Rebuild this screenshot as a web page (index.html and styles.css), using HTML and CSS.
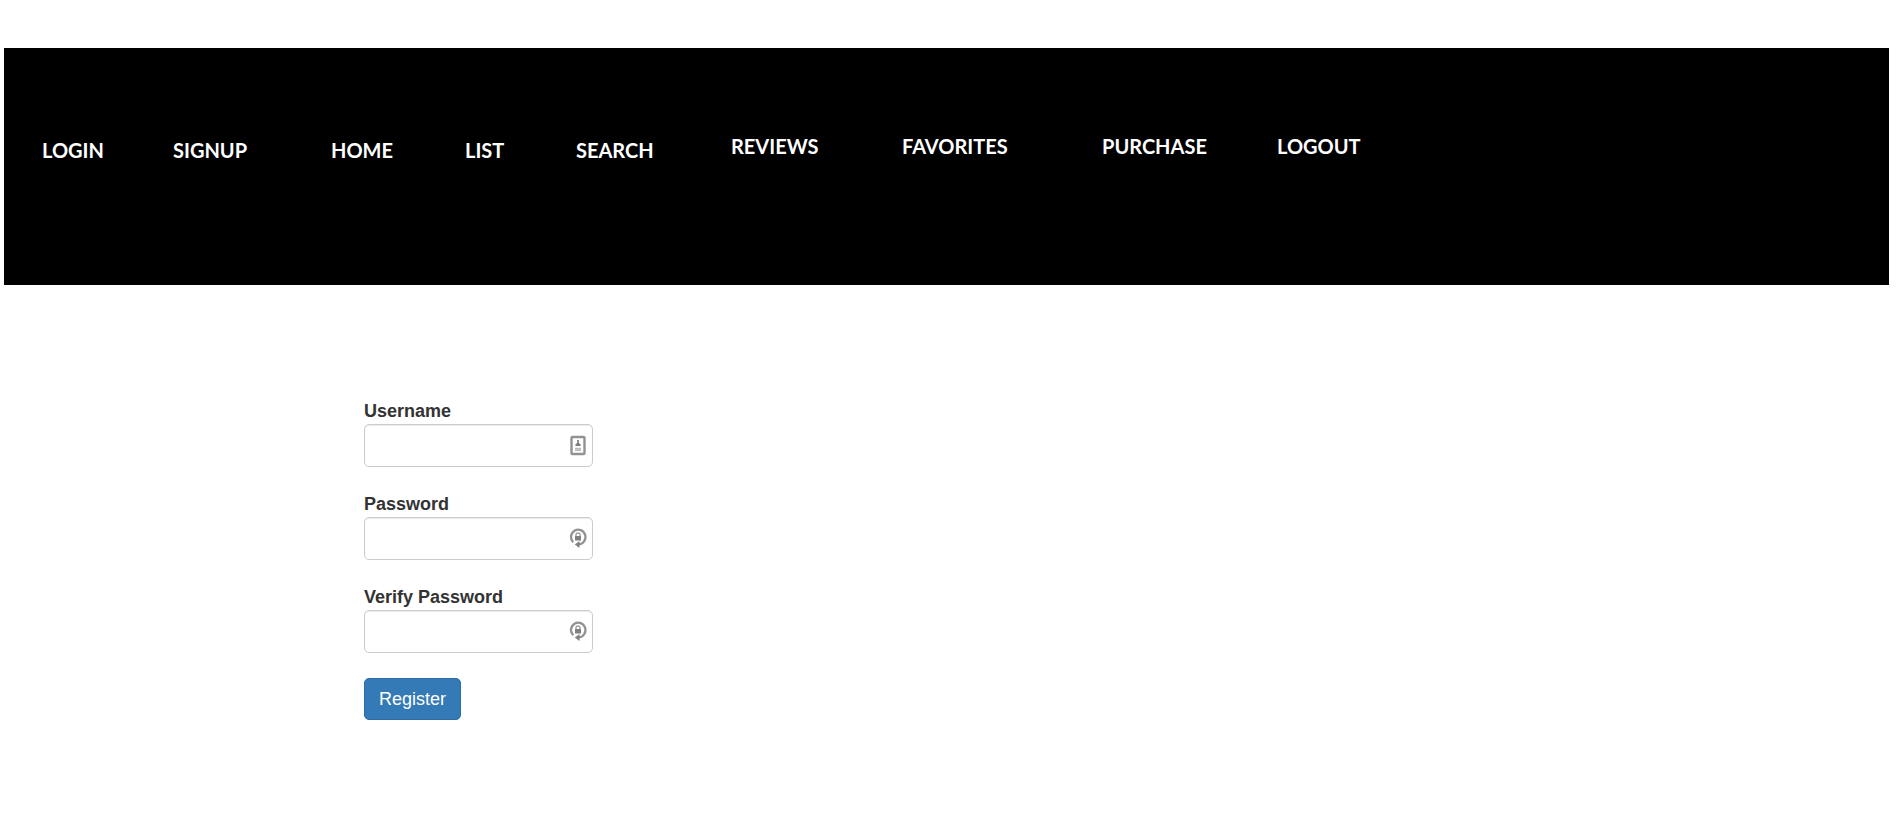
FILE: index.html
```html
<!DOCTYPE html>
<html lang="en">
<head>
  <meta charset="utf-8">
  <meta name="viewport" content="width=device-width, initial-scale=1">
  <title>Register</title>
  <link rel="stylesheet" href="styles.css">
</head>
<body>
  <nav class="navbar">
    <ul class="nav nav-main">
      <li><a href="#login">LOGIN</a></li>
      <li><a href="#signup">SIGNUP</a></li>
      <li><a href="#home">HOME</a></li>
      <li><a href="#list">LIST</a></li>
      <li><a href="#search">SEARCH</a></li>
    </ul>
    <ul class="nav nav-account">
      <li><a href="#reviews">REVIEWS</a></li>
      <li><a href="#favorites">FAVORITES</a></li>
      <li><a href="#purchase">PURCHASE</a></li>
      <li><a href="#logout">LOGOUT</a></li>
    </ul>
  </nav>

  <main class="content">
    <form class="register-form">
      <div class="form-group">
        <label for="username">Username</label>
        <div class="field">
          <input id="username" type="text">
          <svg class="field-icon" viewBox="0 0 18 22" aria-hidden="true">
            <rect x="2.500" y="3" width="13" height="17" rx="1" fill="#fff" stroke="#929292" stroke-width="2.400"/>
            <path d="M9 6v3" stroke="#929292" stroke-width="2"/>
            <path d="M6.500 12V10.500L8 9h2l1.500 1.500V12z" fill="#7c7c7c"/>
            <path d="M6 14.500h6M6 16.300h6" stroke="#b8b8b8" stroke-width="1.600"/>
          </svg>
        </div>
      </div>
      <div class="form-group">
        <label for="password">Password</label>
        <div class="field">
          <input id="password" type="password">
          <svg class="field-icon" viewBox="0 0 18 22" aria-hidden="true">
            <path d="M4.200 15.300A7.200 7.400 0 1 1 9.500 17.400" fill="none" stroke="#929292" stroke-width="2.300"/>
            <path d="M5.800 17.500l4.700-3.500v7z" fill="#808080"/>
            <path d="M7 9.500V8a2 2 0 0 1 4 0v1.500" fill="none" stroke="#a0a0a0" stroke-width="1.400"/>
            <rect x="6" y="9" width="6" height="4.500" fill="#808080"/>
          </svg>
        </div>
      </div>
      <div class="form-group">
        <label for="verify">Verify Password</label>
        <div class="field">
          <input id="verify" type="password">
          <svg class="field-icon" viewBox="0 0 18 22" aria-hidden="true">
            <path d="M4.200 15.300A7.200 7.400 0 1 1 9.500 17.400" fill="none" stroke="#929292" stroke-width="2.300"/>
            <path d="M5.800 17.500l4.700-3.500v7z" fill="#808080"/>
            <path d="M7 9.500V8a2 2 0 0 1 4 0v1.500" fill="none" stroke="#a0a0a0" stroke-width="1.400"/>
            <rect x="6" y="9" width="6" height="4.500" fill="#808080"/>
          </svg>
        </div>
      </div>
      <button class="btn-primary" type="submit">Register</button>
    </form>
  </main>
</body>
</html>
```

FILE: styles.css
```css
* {
  box-sizing: border-box;
}

body {
  margin: 0;
  padding-top: 48px;
  background: #fff;
  color: #333;
  font-family: "Liberation Sans", Arial, sans-serif;
  font-size: 18px;
  line-height: 25px;
}

.navbar {
  display: flex;
  align-items: flex-start;
  margin: 0 15px 0 4px;
  padding: 86px 38px 122px;
  background: #000;
}

.nav {
  display: grid;
  margin: 0;
  padding: 0;
  list-style: none;
  font-family: Lato, Carlito, Calibri, sans-serif;
  font-size: 20px;
  font-weight: 700;
  line-height: 25px;
}

.nav-main {
  grid-template-columns: 131px 158px 134px 111px 155px;
  padding-top: 4px;
}

.nav-account {
  grid-template-columns: 171px 200px 175px auto;
}

.nav a {
  color: #fff;
  text-decoration: none;
}

.content {
  padding: 114px 24px 100px 364px;
}

.register-form {
  max-width: 229px;
}

.form-group {
  margin-bottom: 25px;
}

.form-group label {
  display: block;
  font-weight: 700;
}

.field {
  position: relative;
}

.field input {
  display: block;
  width: 100%;
  height: 43px;
  padding: 8px 32px 8px 15px;
  border: 1px solid #ccc;
  border-radius: 5px;
  background: #fff;
  box-shadow: inset 0 1px 1px rgba(0, 0, 0, 0.08);
  color: #555;
  font: inherit;
}

.field-icon {
  position: absolute;
  top: 10px;
  right: 6px;
  width: 18px;
  height: 22px;
}

.btn-primary {
  height: 42px;
  padding: 0 14px;
  border: 1px solid #2e6da4;
  border-radius: 5px;
  background: #337ab7;
  color: #fff;
  font: inherit;
  cursor: pointer;
}
```
